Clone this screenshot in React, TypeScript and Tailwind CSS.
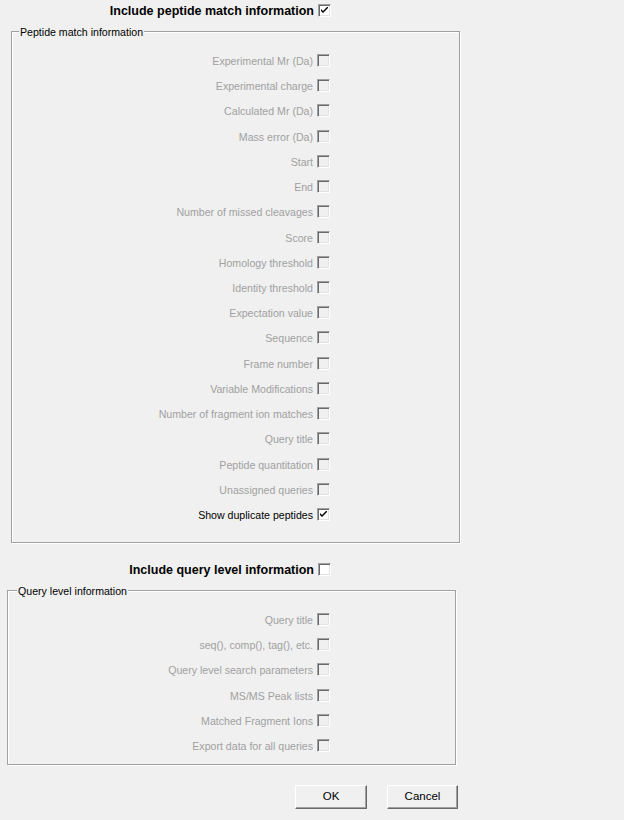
import React from "react";

function Check({ checked, enabled }: { checked?: boolean; enabled?: boolean }) {
  return (
    <div
      className={`relative w-[13px] h-[13px] shrink-0 border-t border-l border-[#a0a0a0] border-r border-b border-r-white border-b-white shadow-[inset_1px_1px_0_#696969,inset_-1px_-1px_0_#e3e3e3] ${
        enabled ? "bg-white" : "bg-[#f0f0f0]"
      }`}
    >
      {checked && (
        <svg className="absolute left-[2px] top-[2px]" width="7" height="7" viewBox="0 0 7 7">
          <path d="M0 2 L0 4 L2 6 L7 1 L7 -1 L2 4 Z" fill="#000" />
        </svg>
      )}
    </div>
  );
}

function Row({ label, enabled, checked }: { label: string; enabled?: boolean; checked?: boolean }) {
  return (
    <div className="flex justify-end items-center h-[13px] gap-[4px]">
      <span className={`leading-[13px] pt-[2px] whitespace-nowrap ${enabled ? "text-black" : "text-[#a0a0a0]"}`}>{label}</span>
      <Check enabled={enabled} checked={checked} />
    </div>
  );
}

const peptideRows = [
  "Experimental Mr (Da)",
  "Experimental charge",
  "Calculated Mr (Da)",
  "Mass error (Da)",
  "Start",
  "End",
  "Number of missed cleavages",
  "Score",
  "Homology threshold",
  "Identity threshold",
  "Expectation value",
  "Sequence",
  "Frame number",
  "Variable Modifications",
  "Number of fragment ion matches",
  "Query title",
  "Peptide quantitation",
  "Unassigned queries",
];

const queryRows = [
  "Query title",
  "seq(), comp(), tag(), etc.",
  "Query level search parameters",
  "MS/MS Peak lists",
  "Matched Fragment Ions",
  "Export data for all queries",
];

function Button({ label, w }: { label: string; w: string }) {
  return (
    <div
      className={`${w} h-[24px] flex items-center justify-center bg-[#f0f0f0] border-t border-l border-t-white border-l-white border-r border-b border-r-[#696969] border-b-[#696969] shadow-[inset_-1px_-1px_0_#a0a0a0] text-[11.5px] text-black`}
    >
      {label}
    </div>
  );
}

export default function App() {
  return (
    <div
      className="w-[624px] h-[820px] bg-[#f0f0f0] text-[10.6px] overflow-hidden"
      style={{ fontFamily: '"Liberation Sans", Arial, sans-serif' }}
    >
      <div className="pt-[4px] w-[331px] flex justify-end items-center h-[17px] gap-[4px]">
        <span className="font-bold text-[12.5px] leading-[13px] pt-[1px] text-black whitespace-nowrap">
          Include peptide match information
        </span>
        <Check enabled checked />
      </div>

      <div className="relative ml-[11px] mt-[14px] w-[449px] h-[512px] border border-[#a0a0a0] shadow-[1px_1px_0_#fff,inset_1px_1px_0_#fff]">
        <span className="absolute left-[7px] -top-[6px] px-[1px] bg-[#f0f0f0] leading-[13px] text-black whitespace-nowrap">
          Peptide match information
        </span>
        <div className="pt-[22px] w-[318px] flex flex-col gap-[12.22px]">
          {peptideRows.map((r) => (
            <Row key={r} label={r} />
          ))}
          <Row label="Show duplicate peptides" enabled checked />
        </div>
      </div>

      <div className="mt-[20px] w-[331px] flex justify-end items-center h-[13px] gap-[4px]">
        <span className="font-bold text-[12.5px] leading-[13px] pt-[1px] text-black whitespace-nowrap">
          Include query level information
        </span>
        <Check enabled />
      </div>

      <div className="relative ml-[7px] mt-[14px] w-[449px] h-[175px] border border-[#a0a0a0] shadow-[1px_1px_0_#fff,inset_1px_1px_0_#fff]">
        <span className="absolute left-[9px] -top-[6px] px-[1px] bg-[#f0f0f0] leading-[13px] text-black whitespace-nowrap">
          Query level information
        </span>
        <div className="pt-[22px] w-[322px] flex flex-col gap-[12.22px]">
          {queryRows.map((r) => (
            <Row key={r} label={r} />
          ))}
        </div>
      </div>

      <div className="mt-[20px] w-[458px] flex justify-end gap-[20px]">
        <Button label="OK" w="w-[72px]" />
        <Button label="Cancel" w="w-[71px]" />
      </div>
    </div>
  );
}
